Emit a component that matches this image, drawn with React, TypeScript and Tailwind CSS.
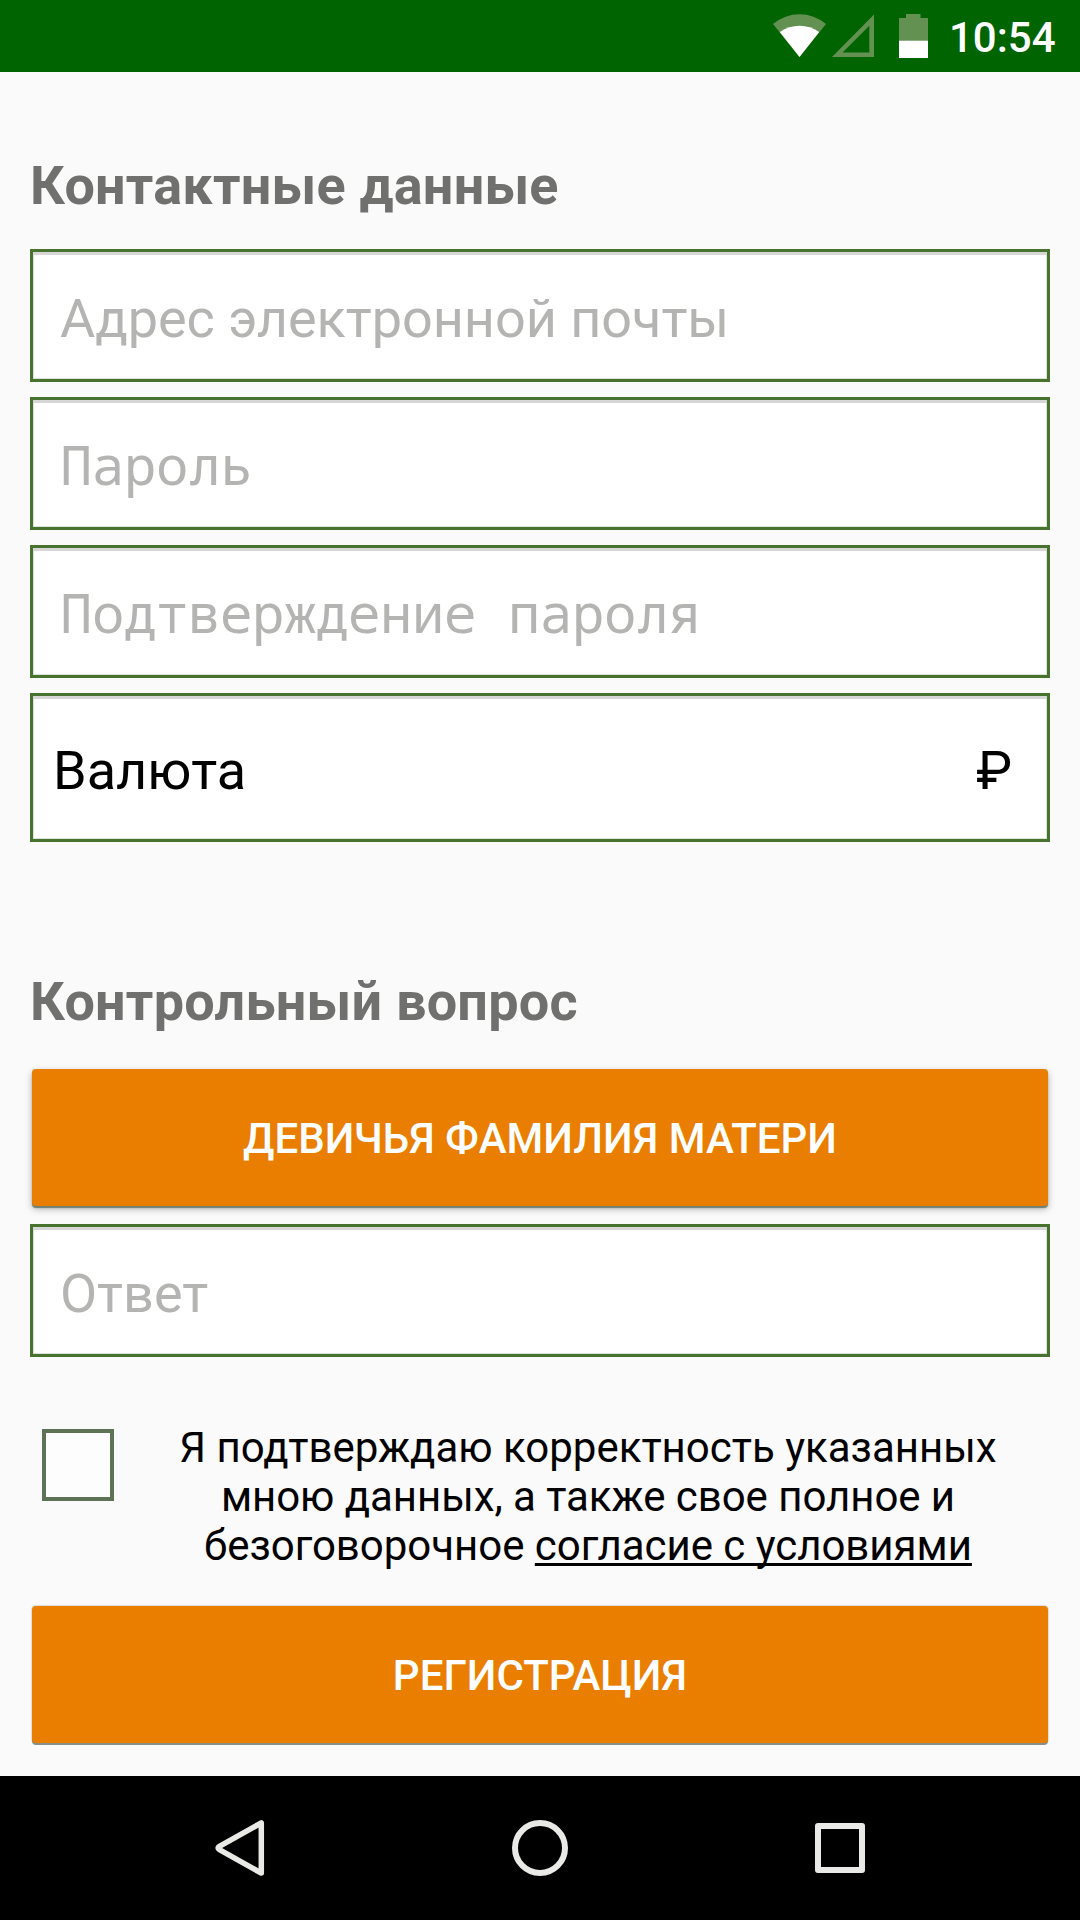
import { useState } from "react";
import type { ReactNode } from "react";

function StatusBar() {
    return (
        <header className="h-[72px] shrink-0 bg-[#006400] flex items-center justify-end pr-[25px]">
            <svg className="w-[160px] h-[72px]" viewBox="771 0 160 72">
                {/* Wifi */}
                <path d="M799.5 57 L773 24 Q785 14.3 799.5 14.3 Q814 14.3 826 24 Z" fill="#629152" />
                <path d="M799.5 57 L779.8 32 Q789 25.7 799.5 25.7 Q810 25.7 819.2 32 Z" fill="#fff" />
                {/* Signal */}
                <path d="M832 57 L874 14.5 V57 Z M842.5 52.5 H869.3 V25.8 Z" fill="#629152" fillRule="evenodd" />
                {/* Battery */}
                <path d="M899 18 H906 V14 H920.5 V18 H928 V41 H899 Z" fill="#629152" />
                <path d="M899 40.7 H928 V58 H899 Z" fill="#fff" />
            </svg>
            <span className="ml-[18px] w-[106px] text-right text-[42px] leading-[72px] font-medium text-white pt-[3px]">10:54</span>
        </header>
    );
}

function NavBar() {
    return (
        <nav className="h-[144px] shrink-0 bg-black flex items-center justify-center gap-[236px]">
            <button aria-label="Back">
                <svg className="w-16 h-16" viewBox="0 0 64 64" fill="none" stroke="#e9e9e6" strokeWidth="5.5" strokeLinejoin="round">
                    <path d="M53.3 6.9 V57.1 L11.4 33.6 Q8.7 32 11.4 30.4 Z" />
                </svg>
            </button>
            <button aria-label="Home">
                <svg className="w-16 h-16" viewBox="0 0 64 64" fill="none" stroke="#e9e9e6" strokeWidth="6">
                    <circle cx="32" cy="32" r="25" />
                </svg>
            </button>
            <button aria-label="Recents">
                <svg className="w-16 h-16" viewBox="0 0 64 64" fill="none" stroke="#e9e9e6" strokeWidth="6" strokeLinejoin="round">
                    <rect x="10" y="10" width="44" height="44" />
                </svg>
            </button>
        </nav>
    );
}

const fieldBox = "w-full border-[3px] border-[#47732f] bg-white shadow-[inset_0_3px_0_#d6d6d6,inset_0_0_0_1px_#dde3da]";

function Field({ label, type = "text" }: { label: string; type?: string }) {
    const font =
        type === "password"
            ? "font-['Droid_Sans_Mono','Noto_Sans_Mono','DejaVu_Sans_Mono',monospace] text-[54px] tracking-[-0.4px]"
            : "text-[54px] tracking-[-0.04px] pt-[6px]";
    return (
        <input
            type={type}
            placeholder={label}
            className={`${fieldBox} ${font} block h-[133px] pl-[27px] pr-[27px] outline-none placeholder:text-[#b4b5b3] placeholder:opacity-100`}
        />
    );
}

function Heading({ children }: { children: ReactNode }) {
    return <h2 className="text-[54px] leading-[64px] font-bold tracking-[0.22px] text-[#70706f]">{children}</h2>;
}

function OrangeButton({ children, flat = false }: { children: ReactNode; flat?: boolean }) {
    const shadow = flat
        ? "shadow-[0_2px_0_#87918a,0_0_1px_1px_rgba(0,0,0,0.12)]"
        : "shadow-[0_2px_1px_#6f7f72,0_3px_7px_rgba(0,0,0,0.3)]";
    return (
        <button className={`${shadow} block mx-[2px] h-[137px] rounded-[4px] bg-[#e97e00] pt-px text-[42px] font-medium text-white`}>
            {children}
        </button>
    );
}

export default function App() {
    const [accepted, setAccepted] = useState(false);

    return (
        <div className="w-[1080px] h-[1920px] overflow-hidden flex flex-col bg-[#fafafa] font-['Roboto',sans-serif] text-black">
            <StatusBar />

            <main className="flex-1 px-[30px] flex flex-col">
                {/* Contact details */}
                <section className="pt-[82px] flex flex-col">
                    <Heading>Контактные данные</Heading>
                    <div className="mt-[31px] flex flex-col gap-[15px]">
                        <Field label="Адрес электронной почты" />
                        <Field label="Пароль" type="password" />
                        <Field label="Подтверждение пароля" type="password" />
                        <div className={`${fieldBox} h-[149px] flex items-center justify-between pl-5 pr-[35px] pt-[6px] text-[54px]`}>
                            <span>Валюта</span>
                            <span>₽</span>
                        </div>
                    </div>
                </section>

                {/* Security question */}
                <section className="pt-[128px] flex flex-col">
                    <Heading>Контрольный вопрос</Heading>
                    <div className="mt-[35px] flex flex-col gap-[18px]">
                        <OrangeButton>ДЕВИЧЬЯ ФАМИЛИЯ МАТЕРИ</OrangeButton>
                        <Field label="Ответ" />
                    </div>
                </section>

                {/* Terms */}
                <section className="pt-[66px] flex flex-col">
                    <div className="flex items-start h-[183px] pl-3 pt-[6px]">
                        <button
                            role="checkbox"
                            aria-checked={accepted}
                            aria-label="Согласие с условиями"
                            onClick={() => setAccepted(!accepted)}
                            className="size-[72px] shrink-0 border-[4.5px] border-[#5e7355] bg-[#fdfdfd]"
                        >
                            {accepted && <span className="text-[48px] leading-none text-[#47732f]">✓</span>}
                        </button>
                        <p className="ml-[48px] w-[852px] -mt-[6px] text-center text-[42px] leading-[49px]">
                            Я подтверждаю корректность указанных
                            <br />
                            <span className="tracking-[-0.05px]">мною данных, а также свое полное и</span>
                            <br />
                            <span className="tracking-[-0.03px]">
                                безоговорочное{" "}
                                <a className="underline decoration-[3px] underline-offset-[3px] [text-decoration-skip-ink:none]">согласие с условиями</a>
                            </span>
                        </p>
                    </div>
                    <OrangeButton flat>РЕГИСТРАЦИЯ</OrangeButton>
                </section>
            </main>

            <NavBar />
        </div>
    );
}
